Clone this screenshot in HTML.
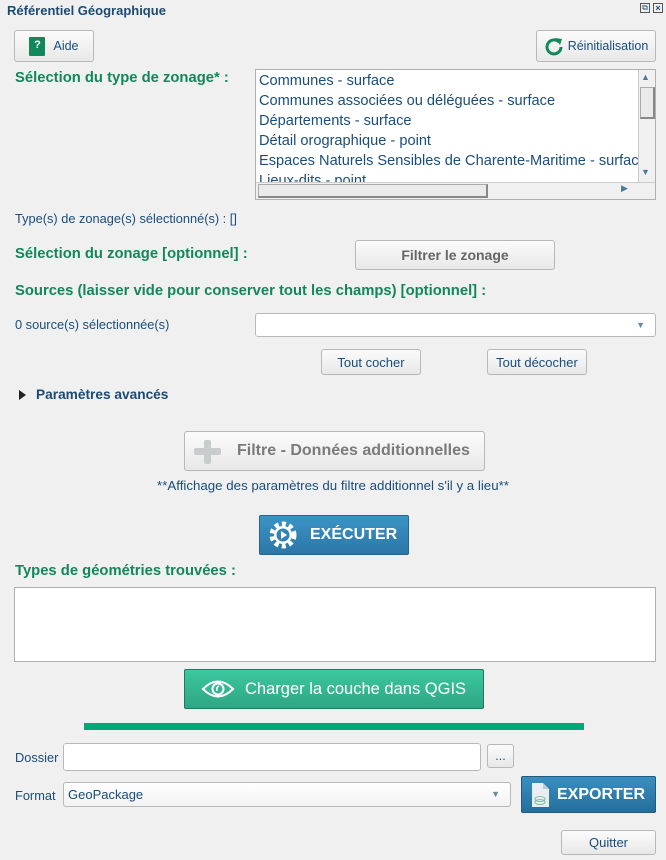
<!DOCTYPE html>
<html><head><meta charset="utf-8"><style>
*{box-sizing:border-box;margin:0;padding:0}
body{width:666px;height:860px;background:#f0f0f0;font-family:"Liberation Sans",sans-serif;position:relative;overflow:hidden;color:#1a4d7a}
.a{position:absolute}
.g{color:#12875c;font-weight:bold;font-size:14.8px}
.btn{position:absolute;border:1px solid #b8b8b8;border-radius:3px;background:linear-gradient(#fbfbfb,#e8e8e8);font-size:12.5px;color:#1a4d7a;display:flex;align-items:center;justify-content:center}
.t{font-size:12.8px}
.inp{position:absolute;background:#fff;border:1px solid #b8b8b8;border-radius:3px}
</style></head><body>
<div class="a" style="left:7px;top:3px;font-size:13px;font-weight:bold;color:#1c4a72">Référentiel Géographique</div>
<div class="a" style="left:640px;top:3px;width:10px;height:10px;border:1px solid #555;font-size:8px;line-height:8px;text-align:center">⧉</div>
<div class="a" style="left:653px;top:3px;width:10px;height:10px;border:1px solid #555;font-size:9px;line-height:8px;text-align:center;font-weight:bold">×</div>

<div class="btn" style="left:14px;top:30px;width:80px;height:32px"><span style="display:inline-block;width:16px;height:19px;background:#12875c;color:#fff;font-size:11px;font-weight:bold;text-align:center;line-height:17px;border-radius:1px;margin-right:8px">?</span>Aide</div>
<div class="btn" style="left:536px;top:30px;width:120px;height:32px"><svg width="20" height="20" viewBox="0 0 20 20" style="margin-right:4px"><path d="M15 6A7 7 0 1 0 17 11" fill="none" stroke="#12875c" stroke-width="3"/><path d="M11 2L18 3L16 9Z" fill="#12875c"/></svg>Réinitialisation</div>

<div class="a g" style="left:15px;top:70px">Sélection du type de zonage* :</div>
<div class="a" style="left:255px;top:69px;width:401px;height:131px;background:#fff;border:1px solid #b0b0b0;overflow:hidden">
<div style="position:absolute;left:3px;top:1px;font-size:14.6px;line-height:20px;white-space:nowrap;color:#1a4d7a">Communes - surface<br>Communes associées ou déléguées - surface<br>Départements - surface<br>Détail orographique - point<br>Espaces Naturels Sensibles de Charente-Maritime - surface<br>Lieux-dits - point</div>
<div style="position:absolute;left:0;top:112px;width:399px;height:18px;background:#f0f0f0;border-top:1px solid #ccc"></div>
<div style="position:absolute;left:2px;top:114px;width:230px;height:14px;background:#eaeaea;border:1px solid #aaa;border-right:2px solid #888;border-bottom:2px solid #888"></div>
<div style="position:absolute;left:365px;top:113px;font-size:9px;color:#4a7a9a">▶</div>
<div style="position:absolute;left:382px;top:0;width:17px;height:112px;background:#f0f0f0;border-left:1px solid #ccc"></div>
<div style="position:absolute;left:384px;top:17px;width:15px;height:32px;background:#eaeaea;border:1px solid #aaa;border-right:2px solid #888;border-bottom:2px solid #888"></div>
<div style="position:absolute;left:385px;top:2px;font-size:9px;color:#4a7a9a">▲</div>
<div style="position:absolute;left:385px;top:97px;font-size:9px;color:#4a7a9a">▼</div>
</div>

<div class="a t" style="left:15px;top:211px">Type(s) de zonage(s) sélectionné(s) : []</div>
<div class="a g" style="left:15px;top:246px">Sélection du zonage [optionnel] :</div>
<div class="btn" style="left:355px;top:240px;width:200px;height:30px;font-size:14px;font-weight:bold;color:#666">Filtrer le zonage</div>
<div class="a g" style="left:15px;top:283px">Sources (laisser vide pour conserver tout les champs) [optionnel] :</div>
<div class="a t" style="left:15px;top:317px">0 source(s) sélectionnée(s)</div>
<div class="inp" style="left:255px;top:313px;width:401px;height:24px"><span style="position:absolute;right:10px;top:6px;font-size:9px;color:#6a8aa0">▼</span></div>
<div class="btn" style="left:321px;top:349px;width:100px;height:26px;font-size:13px">Tout cocher</div>
<div class="btn" style="left:487px;top:349px;width:100px;height:26px;font-size:13px">Tout décocher</div>
<div class="a" style="left:19px;top:390px;width:0;height:0;border-left:7px solid #222;border-top:5px solid transparent;border-bottom:5px solid transparent"></div>
<div class="a" style="left:36px;top:387px;font-size:13.7px;font-weight:bold;color:#1c4a72">Paramètres avancés</div>

<div class="btn" style="left:184px;top:431px;width:301px;height:40px;font-size:16px;font-weight:bold;color:#7a7a7a;justify-content:flex-start"><span style="position:absolute;left:9px;top:8px;width:28px;height:22px"><span style="position:absolute;left:10px;top:0;width:7px;height:24px;background:#c8cccc;border-radius:2px"></span><span style="position:absolute;left:0;top:8px;width:27px;height:7px;background:#c8cccc;border-radius:2px"></span></span><span style="margin-left:52px">Filtre - Données additionnelles</span></div>
<div class="a" style="left:0;width:666px;text-align:center;top:478px;font-size:13.3px">**Affichage des paramètres du filtre additionnel s'il y a lieu**</div>

<div class="a" style="left:259px;top:515px;width:150px;height:40px;background:linear-gradient(#3a94c6,#2c77a6);border:1px solid #24648e;border-radius:2px;color:#fff;font-size:16px;font-weight:bold;display:flex;align-items:center"><svg width="30" height="30" viewBox="0 0 30 30" style="margin-left:8px;margin-right:12px"><circle cx="15" cy="15" r="11" fill="none" stroke="#fff" stroke-width="5" stroke-dasharray="4 3.2"/><circle cx="15" cy="15" r="9" fill="#fff"/><circle cx="15" cy="15" r="6.5" fill="#3185b6"/><path d="M13 11L19 15L13 19Z" fill="#fff"/></svg>EXÉCUTER</div>

<div class="a g" style="left:15px;top:563px">Types de géométries trouvées :</div>
<div class="a" style="left:14px;top:587px;width:642px;height:75px;background:#fff;border:1px solid #b0b0b0"></div>

<div class="a" style="left:184px;top:669px;width:300px;height:40px;background:linear-gradient(#3cc89e,#2ea683);border:1px solid #1f7a5e;border-radius:2px;color:#fff;font-size:16.5px;display:flex;align-items:center"><svg width="34" height="24" viewBox="0 0 34 24" style="margin-left:16px;margin-right:10px"><path d="M2 12Q17 -3 32 12Q17 27 2 12Z" fill="none" stroke="#fff" stroke-width="2"/><circle cx="17" cy="12" r="5.5" fill="none" stroke="#fff" stroke-width="2"/><path d="M16 14Q15 10 18 9" fill="none" stroke="#fff" stroke-width="1.5"/></svg>Charger la couche dans QGIS</div>
<div class="a" style="left:84px;top:723px;width:500px;height:7px;background:#00a878"></div>

<div class="a t" style="left:15px;top:750px">Dossier</div>
<div class="inp" style="left:63px;top:743px;width:418px;height:28px"></div>
<div class="btn" style="left:487px;top:744px;width:27px;height:24px">...</div>
<div class="a t" style="left:15px;top:788px">Format</div>
<div class="inp" style="left:63px;top:782px;width:448px;height:25px;background:linear-gradient(#fff,#f2f2f2)"><span style="position:absolute;left:4px;top:4px;font-size:13px">GeoPackage</span><span style="position:absolute;right:10px;top:6px;font-size:9px;color:#6a8aa0">▼</span></div>
<div class="a" style="left:521px;top:776px;width:135px;height:37px;background:linear-gradient(#3a8fc0,#256e9c);border:1px solid #1f5b82;border-radius:2px;color:#fff;font-size:16px;font-weight:bold;display:flex;align-items:center"><svg width="20" height="26" viewBox="0 0 20 26" style="margin-left:9px;margin-right:6px"><path d="M1 1H12L18 7V25H1Z" fill="#e8eef2"/><path d="M12 1V7H18" fill="#c0ccd4"/><ellipse cx="9" cy="17" rx="5" ry="2.5" fill="none" stroke="#7ac0a0"/><ellipse cx="9" cy="20" rx="5" ry="2.5" fill="none" stroke="#7ac0a0"/></svg>EXPORTER</div>
<div class="btn" style="left:561px;top:830px;width:95px;height:25px;font-size:13px">Quitter</div>
</body></html>
